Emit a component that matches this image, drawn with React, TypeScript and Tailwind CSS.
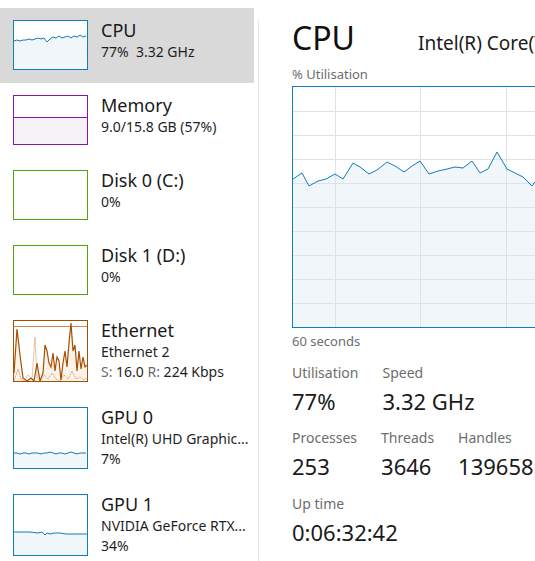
import React from 'react'

type Pt = [number, number]

// turns a list of points into an svg polyline path
const toPath = (pts: Pt[]) => pts.map((p, i) => `${i === 0 ? 'M' : 'L'}${p[0]},${p[1]}`).join(' ')

const areaPath = (pts: Pt[], w: number, h: number) =>
  `${toPath(pts)} L${w},${h} L0,${h} Z`

const cpuThumb: Pt[] = [20, 19, 20, 19, 19, 18, 19, 18, 17, 18, 17, 21, 18, 16, 17, 15, 17, 16, 15, 17, 15, 16, 14, 16, 15].map(
  (y, i) => [i * 3, y] as Pt
)

const gpu0Thumb: Pt[] = [45, 45, 46, 45, 45, 46, 45, 45, 45, 46, 45, 45, 44, 45, 46, 45, 45, 46, 45, 44, 45, 46, 45, 45, 45].map(
  (y, i) => [i * 3, y] as Pt
)

const gpu1Thumb: Pt[] = [
  [0, 37], [8, 37], [16, 37], [24, 38], [28, 37], [31, 40], [33, 38], [36, 39], [40, 38], [46, 38], [52, 39], [58, 39], [64, 39], [73, 39],
]

const ethRecv: Pt[] = [
  [0, 52], [3, 8], [6, 34], [9, 57], [13, 60], [17, 57], [20, 60], [23, 42], [26, 60], [29, 52], [31, 24], [33, 30], [35, 42], [37, 46],
  [39, 32], [41, 50], [43, 36], [45, 40], [47, 59], [49, 42], [51, 30], [53, 46], [55, 22], [57, 2], [59, 30], [61, 24], [63, 50],
  [65, 30], [67, 48], [69, 36], [71, 46], [73, 44],
]

const ethSend: Pt[] = [
  [0, 60], [4, 48], [7, 58], [10, 60], [14, 54], [18, 58], [21, 16], [23, 56], [26, 60], [30, 54], [34, 58], [38, 52], [42, 58], [46, 60],
  [50, 54], [54, 58], [58, 50], [62, 58], [66, 56], [70, 59], [73, 57],
]

const mainLine: Pt[] = [
  [0, 92], [9, 86], [16, 99], [25, 94], [33, 92], [42, 87], [50, 92], [60, 76], [67, 80], [76, 87], [84, 83], [94, 75], [102, 79],
  [111, 85], [119, 79], [127, 74], [136, 87], [145, 84], [154, 82], [162, 80], [170, 81], [179, 74], [187, 86], [195, 82], [204, 65],
  [214, 82], [222, 86], [230, 90], [239, 99], [242, 95], [250, 88], [258, 91], [266, 84], [274, 89], [282, 86], [290, 92], [298, 88],
]

const CpuThumb = () => (
  <svg width="73" height="48" className="block">
    <path d={areaPath(cpuThumb, 73, 48)} fill="#f1f6fa" />
    <path d={toPath(cpuThumb)} fill="none" stroke="#117dbb" strokeWidth="1" />
  </svg>
)

const MemThumb = () => (
  <svg width="73" height="48" className="block">
    <rect x="0" y="21" width="73" height="27" fill="#f4f2f4" />
    <line x1="0" y1="21.5" x2="73" y2="21.5" stroke="#8b12ae" strokeWidth="1" />
  </svg>
)

const EthThumb = () => (
  <svg width="73" height="60" className="block">
    <path d={areaPath(ethRecv, 73, 60)} fill="#fcf3eb" />
    <line x1="0" y1="5.5" x2="73" y2="5.5" stroke="#c98a5a" strokeWidth="1" />
    <path d={toPath(ethSend)} fill="none" stroke="#c98a5a" strokeWidth="1" strokeDasharray="1 1" />
    <path d={toPath(ethRecv)} fill="none" stroke="#a74f01" strokeWidth="1.2" />
  </svg>
)

const GpuThumb = ({ pts, h }: { pts: Pt[]; h: number }) => (
  <svg width="73" height={h} className="block">
    <path d={areaPath(pts, 73, h)} fill="#f1f6fa" />
    <path d={toPath(pts)} fill="none" stroke="#117dbb" strokeWidth="1" />
  </svg>
)

interface Row {
  title: string
  lines: React.ReactNode[]
  thumb: React.ReactNode
  border: string
  tall?: boolean
  selected?: boolean
}

const rows: Row[] = [
  { title: 'CPU', lines: ['77%  3.32 GHz'], thumb: <CpuThumb />, border: 'border-[#117dbb]', selected: true },
  { title: 'Memory', lines: ['9.0/15.8 GB (57%)'], thumb: <MemThumb />, border: 'border-[#8b12ae]' },
  { title: 'Disk 0 (C:)', lines: ['0%'], thumb: null, border: 'border-[#4da60c]' },
  { title: 'Disk 1 (D:)', lines: ['0%'], thumb: null, border: 'border-[#4da60c]' },
  {
    title: 'Ethernet',
    lines: [
      'Ethernet 2',
      <>
        <span className="text-[#6b6b6b]">S:</span> 16.0 <span className="text-[#6b6b6b]">R:</span> 224 Kbps
      </>,
    ],
    thumb: <EthThumb />,
    border: 'border-[#a74f01]',
    tall: true,
  },
  {
    title: 'GPU 0',
    lines: ['Intel(R) UHD Graphic...', '7%'],
    thumb: <GpuThumb pts={gpu0Thumb} h={60} />,
    border: 'border-[#117dbb]',
    tall: true,
  },
  {
    title: 'GPU 1',
    lines: ['NVIDIA GeForce RTX...', '34%'],
    thumb: <GpuThumb pts={gpu1Thumb} h={60} />,
    border: 'border-[#117dbb]',
    tall: true,
  },
]

const SideRow = ({ row }: { row: Row }) => (
  <div className={`flex ${row.tall ? 'h-[87px]' : 'h-[75px]'} ${row.selected ? 'bg-[#d9d9d9]' : ''}`}>
    <div className={`ml-[13px] mt-[12px] w-[75px] ${row.tall ? 'h-[62px]' : 'h-[50px]'} border ${row.border} bg-white shrink-0`}>
      {row.thumb}
    </div>
    <div className="ml-[13px] pt-[10px] min-w-0 w-[152px]">
      <div className="text-[18px] leading-[24px] text-[#1a1a1a]">{row.title}</div>
      {row.lines.map((l, i) => (
        <div key={i} className="text-[14px] leading-[20px] text-[#1f1f1f] whitespace-pre">
          {l}
        </div>
      ))}
    </div>
  </div>
)

const Stat = ({ label, value }: { label: string; value: string }) => (
  <div className="flex flex-col">
    <div className="text-[14px] leading-[20px] text-[#6d6d6d]">{label}</div>
    <div className="mt-[4px] text-[22px] leading-[28px] text-[#1a1a1a]">{value}</div>
  </div>
)

const MainChart = () => {
  const w = 298
  const h = 240
  return (
    <div className="w-[300px] h-[242px] border border-[#117dbb] shrink-0">
      <svg width={w} height={h} className="block">
        <path d={areaPath(mainLine, w, h)} fill="#f1f6fa" />
        {[1, 2, 3, 4, 5, 6, 7, 8, 9].map((k) => (
          <line key={k} x1="0" x2={w} y1={k * 24 + 0.5} y2={k * 24 + 0.5} stroke="#dbe3ea" strokeWidth="1" />
        ))}
        {[42, 127, 213].map((x) => (
          <line key={x} x1={x + 0.5} x2={x + 0.5} y1="0" y2={h} stroke="#dbe3ea" strokeWidth="1" />
        ))}
        <path d={toPath(mainLine)} fill="none" stroke="#117dbb" strokeWidth="1" />
      </svg>
    </div>
  )
}

export default function App() {
  return (
    <div className="w-[535px] h-[561px] overflow-hidden bg-white flex font-['Noto_Sans',sans-serif]">
      <div className="w-[254px] shrink-0 pt-[8px]">
        {rows.map((r) => (
          <SideRow key={r.title} row={r} />
        ))}
      </div>
      <div className="ml-[4px] mt-[20px] w-px bg-[#e5e5e5] shrink-0" />
      <div className="pl-[33px] pt-[18px] flex flex-col whitespace-nowrap shrink-0">
        <div className="flex items-baseline">
          <div className="w-[126px] shrink-0 text-[32px] leading-[40px] text-[#0f0f0f]">CPU</div>
          <div className="text-[19px] leading-[28px] text-[#1a1a1a]">Intel(R) Core(TM) i7</div>
        </div>
        <div className="mt-[7px] text-[13px] leading-[18px] text-[#6d6d6d]">% Utilisation</div>
        <div className="mt-[3px]">
          <MainChart />
        </div>
        <div className="mt-[4px] text-[13px] leading-[18px] text-[#6d6d6d]">60 seconds</div>
        <div className="mt-[13px] flex gap-6">
          <Stat label="Utilisation" value="77%" />
          <Stat label="Speed" value="3.32 GHz" />
        </div>
        <div className="mt-[13px] flex gap-6">
          <Stat label="Processes" value="253" />
          <Stat label="Threads" value="3646" />
          <Stat label="Handles" value="139658" />
        </div>
        <div className="mt-[14px] flex">
          <Stat label="Up time" value="0:06:32:42" />
        </div>
      </div>
    </div>
  )
}
